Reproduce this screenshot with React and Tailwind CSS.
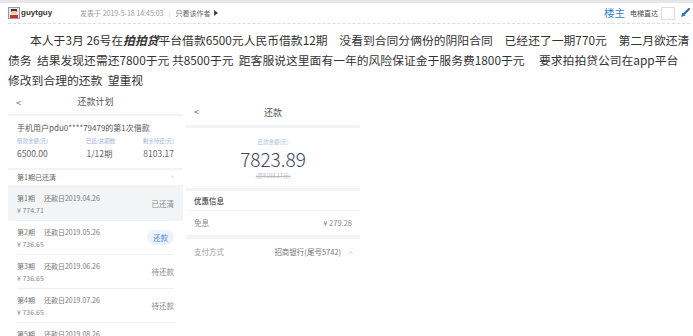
import React from "react";

const cjk = "font-['Noto_Sans_CJK_SC','Noto_Sans',sans-serif]";

const Avatar = () => (
  <svg width="12" height="12" viewBox="0 0 12 12" className="shrink-0">
    <rect x="0.5" y="0.5" width="11" height="11" fill="#e9e9e9" stroke="#9a9a9a" />
    <rect x="3" y="2" width="6" height="3" fill="#3a3a3a" />
    <rect x="3.5" y="4" width="5" height="3.5" fill="#f1c9a8" />
    <rect x="2" y="8" width="8" height="3" fill="#c8332f" />
  </svg>
);

const plans = [
  { no: 1, date: "2019.04.26", amt: "774.71", status: "已还清", active: true },
  { no: 2, date: "2019.05.26", amt: "736.65", status: "还款", button: true },
  { no: 3, date: "2019.06.26", amt: "736.65", status: "待还款" },
  { no: 4, date: "2019.07.26", amt: "736.65", status: "待还款" },
  { no: 5, date: "2019.08.26", amt: "736.65", status: "待还款" },
];

const PlanShot = () => (
  <div className="flex w-[175px] shrink-0 flex-col bg-white">
    <div className="relative flex h-[26px] items-center justify-center border-b-2 border-[#f2f3f5]">
      <span className="absolute left-[8px] top-[6px] text-[9px] text-[#666]">&lt;</span>
      <span className="text-[9px] text-[#555]">还款计划</span>
    </div>
    <div className="flex flex-col px-[9px] pt-[6px] pb-[8px]">
      <div className="text-[8px] leading-[12px] text-[#555]">手机用户pdu0****79479的第1次借款</div>
      <div className="mt-[3px] flex justify-between text-[5.5px] leading-[8px] text-[#9db3d6]">
        <span>借款金额(元)</span>
        <span className="ml-[10px]">已还/总期数</span>
        <span>剩余待还(元)</span>
      </div>
      <div className="mt-[2px] flex justify-between text-[8.5px] leading-[13px] text-[#666]">
        <span>6500.00</span>
        <span className="ml-[8px]">1/12期</span>
        <span>8103.17</span>
      </div>
    </div>
    <div className="flex h-[19px] items-center justify-between border-y-2 border-[#f2f3f5] px-[9px]">
      <span className="text-[7px] text-[#666]">第1期已还清</span>
      <span className="text-[6px] text-[#ccc]">^</span>
    </div>
    {plans.map((p) => (
      <div
        key={p.no}
        className={`flex h-[34px] shrink-0 items-center justify-between px-[9px] ${p.active ? "bg-[#f3f4f6]" : ""}`}
      >
        <div className="flex h-full flex-1 items-center justify-between border-b border-[#f0f0f0]">
          <div className="flex flex-col">
            <div className="flex gap-[9px] text-[7px] leading-[12px] text-[#777]">
              <span>第{p.no}期</span>
              <span>还款日{p.date}</span>
            </div>
            <span className="text-[7px] leading-[12px] text-[#888]">¥ {p.amt}</span>
          </div>
          {p.button ? (
            <span className="rounded-full bg-[#edf3fd] px-[6px] py-[2px] text-[7.5px] text-[#4a86e8]">{p.status}</span>
          ) : (
            <span className="text-[7.5px] text-[#888]">{p.status}</span>
          )}
        </div>
      </div>
    ))}
  </div>
);

const PayShot = () => (
  <div className="mt-[8px] flex w-[174px] shrink-0 flex-col bg-white">
    <div className="relative flex h-[27px] items-center justify-center pt-[2px]">
      <span className="absolute left-[8px] top-[7px] text-[9px] text-[#666]">&lt;</span>
      <span className="text-[9px] text-[#555]">还款</span>
    </div>
    <div className="h-[3px] bg-[#f2f3f5]" />
    <div className="flex h-[60px] flex-col items-center pt-[10px]">
      <span className="text-[5.5px] leading-[8px] text-[#a9bedf]">还款金额(元)</span>
      <span className="text-[19px] font-light leading-[26px] text-[#3e4766]">7823.89</span>
      <span className="text-[5.5px] leading-[8px] text-[#bbb] line-through">(原8103.17元)</span>
    </div>
    <div className="h-[3px] bg-[#f2f3f5]" />
    <div className="flex h-[20px] items-center border-b border-[#f2f2f2] px-[8px]">
      <span className="text-[7.5px] font-medium text-[#444]">优惠信息</span>
    </div>
    <div className="flex h-[24px] items-center justify-between px-[8px]">
      <span className="text-[7.5px] text-[#888]">免息</span>
      <span className="text-[7.5px] text-[#888]">¥ 279.28</span>
    </div>
    <div className="h-[4px] bg-[#f2f3f5]" />
    <div className="flex h-[26px] items-center justify-between pl-[8px] pr-[7px]">
      <span className="text-[7.5px] text-[#999]">支付方式</span>
      <span className="flex items-center gap-[8px] text-[7.5px] text-[#777]">
        招商银行(尾号5742)
        <span className="text-[7px] text-[#ccc]">&gt;</span>
      </span>
    </div>
  </div>
);

export default function App() {
  return (
    <div className={`h-[336px] w-[693px] overflow-hidden bg-white ${cjk}`}>
      <div className="h-[3px] bg-[#e6e6e6]" />
      <div className="ml-[8px] mr-[3px] flex h-[21px] items-center justify-between border-b border-dashed border-[#dcdcdc]">
        <div className="flex items-center">
          <Avatar />
          <span className="ml-[1px] font-['Liberation_Sans',sans-serif] text-[8px] font-bold text-[#333]">guytguy</span>
          <span className="ml-[28px] text-[7px] text-[#999]">发表于 2019-5-18 14:45:03</span>
          <span className="ml-[5px] text-[7px] text-[#ccc]">|</span>
          <span className="ml-[5px] text-[7px] text-[#666]">只看该作者</span>
          <span className="ml-[4px] h-0 w-0 border-y-[3px] border-l-[4px] border-y-transparent border-l-[#444]" />
        </div>
        <div className="flex items-center">
          <span className="text-[10.5px] text-[#2d7fd1]">楼主</span>
          <span className="ml-[5px] text-[7px] text-[#444]">电梯直达</span>
          <span className="ml-[3px] h-[13px] w-[14px] border border-[#ddd] bg-white" />
          <svg width="10" height="10" viewBox="0 0 10 10" className="ml-[5px]">
            <path d="M9 1 L4 6" stroke="#2d6fb8" strokeWidth="2.2" strokeLinecap="round" />
            <path d="M1 9 L2.5 4.5 L5.5 7.5 Z" fill="#2d6fb8" />
          </svg>
        </div>
      </div>
      <div className="mx-[8px] mt-[6px] text-[11.8px] leading-[20px] text-[#333]">
        <p className="indent-[22px] whitespace-nowrap">
          本人于3月 26号在<b className="italic">拍拍贷</b>平台借款6500元人民币借款12期{"\u3000"}没看到合同分俩份的阴阳合同{"\u3000"}已经还了一期770元{"\u3000"}第二月欲还清
        </p>
        <p className="whitespace-nowrap">
          债务{"\u00a0\u00a0"}结果发现还需还7800于元 共8500于元{"\u00a0\u00a0"}距客服说这里面有一年的风险保证金于服务费1800于元{"\u00a0\u3000"}要求拍拍贷公司在app平台
        </p>
        <p className="whitespace-nowrap">修改到合理的还款{"\u00a0\u00a0"}望重视</p>
      </div>
      <div className="mx-[8px] flex items-start gap-[3px]">
        <PlanShot />
        <PayShot />
      </div>
    </div>
  );
}
